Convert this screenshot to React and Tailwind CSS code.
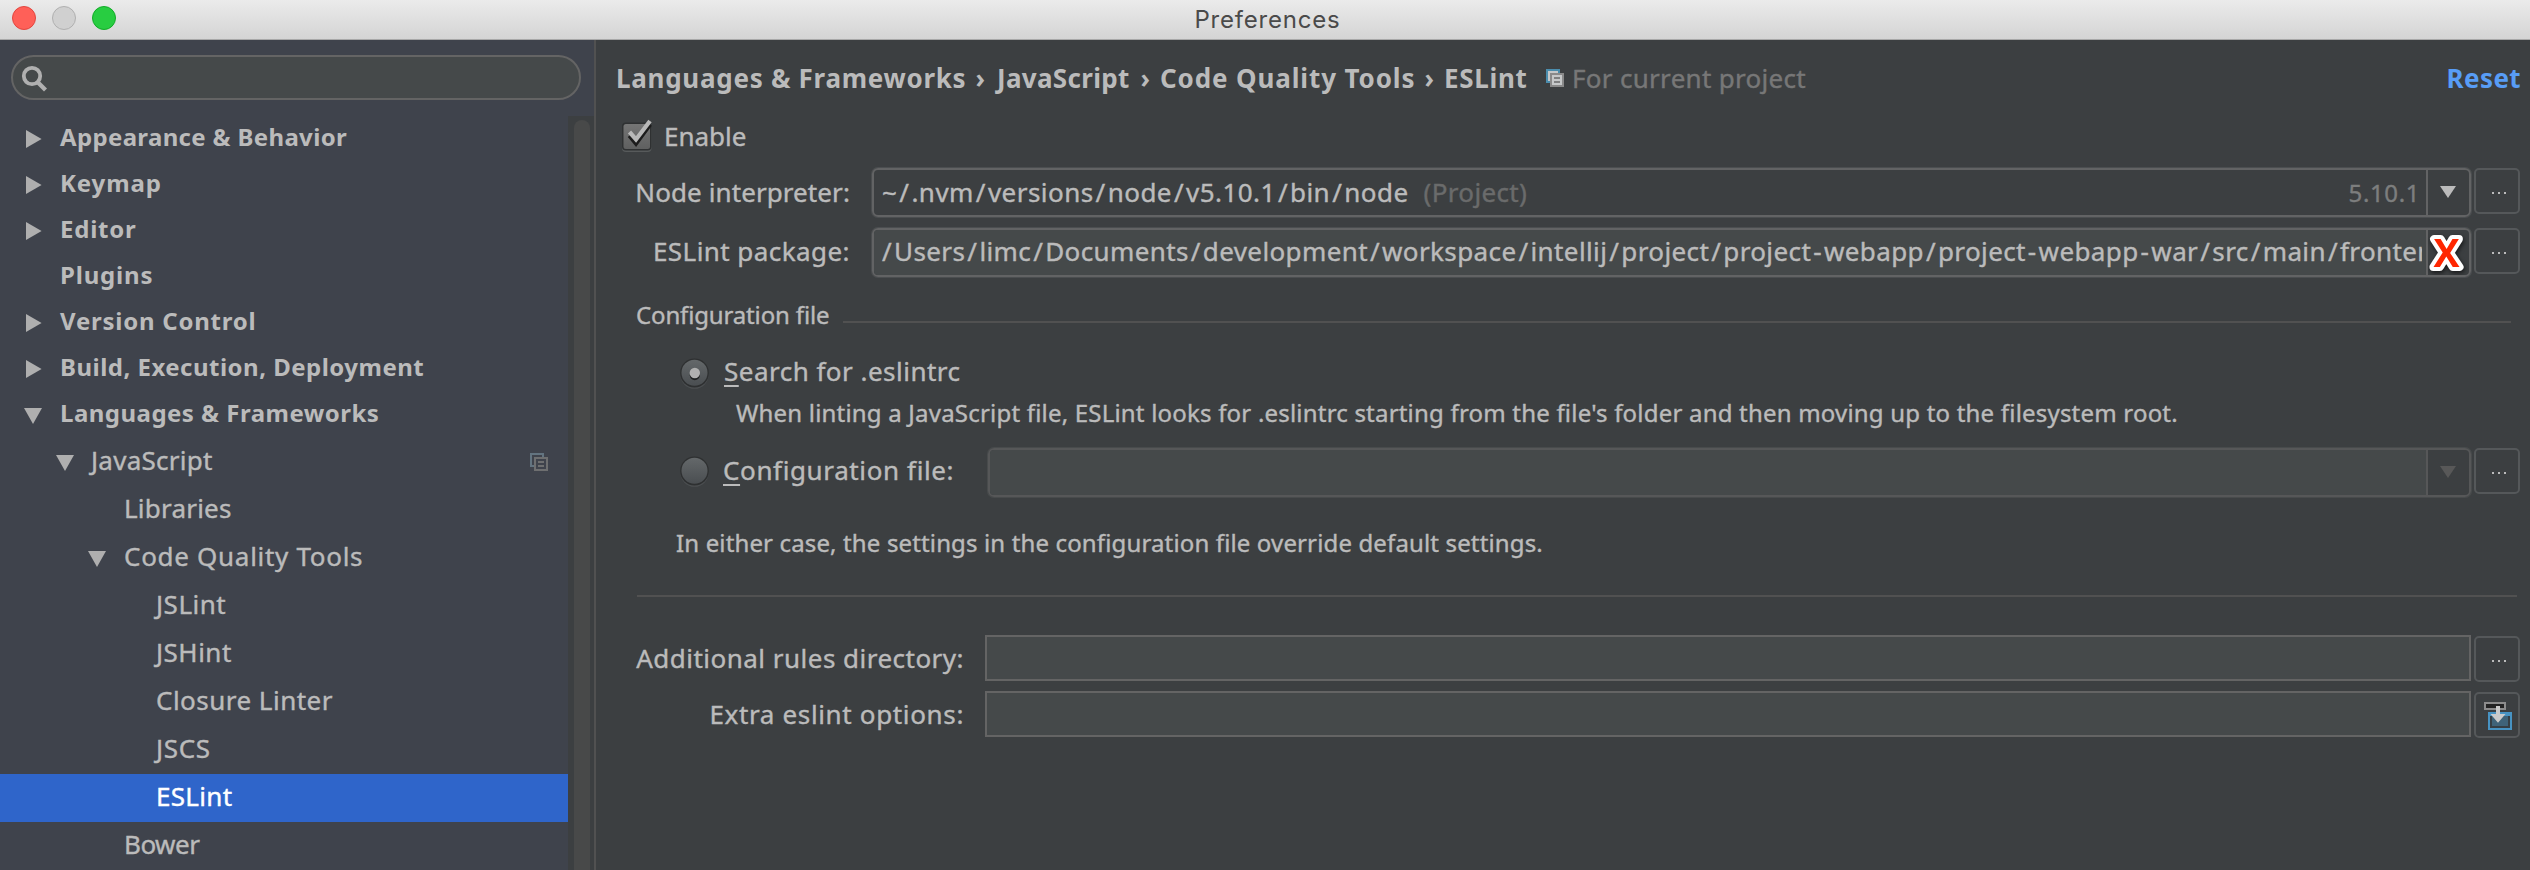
import React from "react";

const TREE = [
  { label: "Appearance & Behavior", level: 0, arrow: "right", track: "tracking-[0.34px]" },
  { label: "Keymap", level: 0, arrow: "right", track: "tracking-[0.9px]" },
  { label: "Editor", level: 0, arrow: "right", track: "tracking-[0.76px]" },
  { label: "Plugins", level: 0, track: "tracking-[0.82px]" },
  { label: "Version Control", level: 0, arrow: "right", track: "tracking-[0.76px]" },
  { label: "Build, Execution, Deployment", level: 0, arrow: "right", track: "tracking-[0.48px]" },
  { label: "Languages & Frameworks", level: 0, arrow: "down", track: "tracking-[0.48px]" },
  { label: "JavaScript", level: 1, arrow: "down", scoped: true, track: "tracking-[0.26px]" },
  { label: "Libraries", level: 2, track: "tracking-[0.22px]" },
  { label: "Code Quality Tools", level: 2, arrow: "down", track: "tracking-[0.7px]" },
  { label: "JSLint", level: 3, track: "tracking-[0.51px]" },
  { label: "JSHint", level: 3, track: "tracking-[0.5px]" },
  { label: "Closure Linter", level: 3, track: "tracking-[0.48px]" },
  { label: "JSCS", level: 3, track: "tracking-[0.67px]" },
  { label: "ESLint", level: 3, selected: true, track: "tracking-[0.3px]" },
  { label: "Bower", level: 2, track: "tracking-[-0.5px]" },
];

const ARROW_PAD = ["pl-[24px]", "pl-[56px]", "pl-[88px]", "pl-[120px]"];
const LABEL_WIDTH = ["w-[36px]", "w-[35px]", "w-[36px]", "w-[36px]"];

function TreeArrow({ dir }) {
  if (!dir) return null;
  return (
    <svg width="18" height="18" viewBox="0 0 18 18" fill="#afafaf">
      {dir === "right" ? <path d="M2 0L17.6 9L2 18Z" /> : <path d="M0 2H18L9 18Z" />}
    </svg>
  );
}

function CopyIcon({ back, front, fill, bars }) {
  return (
    <svg width="18" height="18" viewBox="0 0 18 18" shapeRendering="crispEdges">
      <rect x="1" y="1" width="12" height="12" fill={fill} stroke={back} strokeWidth="2" />
      <rect x="5" y="5" width="12" height="12" fill={fill} stroke={front} strokeWidth="2" />
      <rect x="8" y="8" width="6" height="2" fill={bars} />
      <rect x="8" y="12" width="6" height="2" fill={bars} />
    </svg>
  );
}

function TreeRow({ item }) {
  const top = item.level === 0;
  return (
    <div
      className={
        "flex shrink-0 items-center " +
        ARROW_PAD[item.level] +
        (top
          ? " h-[46px] text-[24px] font-bold"
          : " h-[48px] text-[26px] [-webkit-text-stroke:0.4px_currentColor]") +
        (item.selected ? " bg-[#2f65ca] text-white" : "")
      }
    >
      <div className={"flex shrink-0 items-center " + LABEL_WIDTH[item.level]}>
        <TreeArrow dir={item.arrow} />
      </div>
      <span className={"pb-[4px] leading-none whitespace-nowrap " + item.track}>{item.label}</span>
      {item.scoped && (
        <span className="mr-[20px] ml-auto">
          <CopyIcon back="#637480" front="#6e6f70" fill="#3f434c" bars="#6e6f70" />
        </span>
      )}
    </div>
  );
}

function Sidebar() {
  return (
    <aside className="flex w-[596px] shrink-0 flex-col overflow-hidden border-r-2 border-[#515151] bg-[#3f434c]">
      <div className="flex h-[76px] shrink-0 items-start pt-[15px] pl-[11px]">
        <div className="flex h-[45px] w-[570px] items-center rounded-full border-2 border-[#646464] bg-[#45494a] pl-[8px]">
          <svg width="28" height="28" viewBox="0 0 28 28" fill="none" stroke="#b0b0b0">
            <circle cx="11" cy="12" r="8.2" strokeWidth="3.8" />
            <path d="M16.5 18L24.5 26" strokeWidth="4.2" />
          </svg>
        </div>
      </div>
      <div className="flex min-h-0 flex-1">
        <div className="flex w-[568px] flex-col overflow-hidden text-[#bbbbbb]">
          {TREE.map((item, i) => (
            <TreeRow key={i} item={item} />
          ))}
        </div>
        <div className="flex flex-1 bg-[#3c3f41] pt-[4px] pl-[6px]">
          <div className="w-[16px] rounded-t-full bg-[#484949]" />
        </div>
      </div>
    </aside>
  );
}

function SmallButton({ children }) {
  return (
    <button className="mt-px ml-[2px] flex h-[46px] w-[46px] shrink-0 items-start self-start rounded-[5px] border-2 border-[#55585a]">
      {children || (
        <span className="flex gap-[4px] pt-[22px] pl-[16px]">
          <i className="h-[2px] w-[2px] bg-[#bbbbbb]" />
          <i className="h-[2px] w-[2px] bg-[#bbbbbb]" />
          <i className="h-[2px] w-[2px] bg-[#bbbbbb]" />
        </span>
      )}
    </button>
  );
}

function Combo({ children, disabled, editable, right }) {
  return (
    <div
      className={
        "mt-px mr-px ml-px flex h-[49px] min-w-0 flex-1 overflow-hidden rounded-[6px] border-2 " +
        (disabled
          ? "border-[#565758] shadow-[0_0_0_1px_#484b4c]"
          : "border-[#626364] shadow-[0_0_0_1px_#4b4e50]")
      }
    >
      <div
        className={
          "flex min-w-0 flex-1 items-center overflow-hidden " + (editable ? "bg-[#45494a]" : "")
        }
      >
        {children}
      </div>
      <div
        className={
          "flex w-[43px] shrink-0 items-center justify-center border-l-2 " +
          (disabled ? "border-[#565758]" : "border-[#626364]")
        }
      >
        {right || (
          <svg width="16" height="12" viewBox="0 0 16 12" className="mb-[1px] -ml-[2px]">
            <path d="M0 0H16L8 12Z" fill={disabled ? "#585858" : "#bbbbbb"} />
          </svg>
        )}
      </div>
    </div>
  );
}

/* File path with wide separators */
function PathText({ path }) {
  return path.split(/([/-])/).map((part, i) =>
    part === "/" || part === "-" ? (
      <span key={i} className="mx-[2px]">
        {part}
      </span>
    ) : (
      part
    )
  );
}

function Radio({ checked }) {
  return (
    <svg width="32" height="34" viewBox="0 0 32 34" className="shrink-0">
      <defs>
        <linearGradient id="radioFill" x1="0" y1="0" x2="0" y2="1">
          <stop offset="0" stopColor="#64686a" />
          <stop offset="1" stopColor="#4a4e51" />
        </linearGradient>
      </defs>
      <circle cx="16.5" cy="17.6" r="14.2" fill="#4c4f51" />
      <circle cx="16.5" cy="16" r="14.4" fill="#2e3031" />
      <circle cx="16.5" cy="15.8" r="13" fill="url(#radioFill)" />
      {checked && (
        <>
          <circle cx="16.8" cy="18.2" r="5" fill="#1f2122" />
          <circle cx="16.8" cy="16" r="5.2" fill="#b0b0b0" />
        </>
      )}
    </svg>
  );
}

function Checkbox() {
  return (
    <svg width="34" height="34" viewBox="0 0 34 34" className="shrink-0">
      <defs>
        <linearGradient id="checkFill" x1="0" y1="0" x2="0" y2="1">
          <stop offset="0" stopColor="#757575" />
          <stop offset="1" stopColor="#5f6060" />
        </linearGradient>
      </defs>
      <rect x="2" y="6" width="29.5" height="27" rx="4" fill="#575a5b" />
      <rect x="2" y="3.5" width="29.5" height="28" rx="4" fill="#2f3132" />
      <rect x="3.5" y="5" width="26.5" height="25" rx="2.5" fill="url(#checkFill)" />
      <path d="M9.5 16.5L16 24.5L30 5.5" fill="none" stroke="#1c1c1c" strokeWidth="4.4" />
      <path d="M9.5 13L16 20.5L30 2" fill="none" stroke="#b8b8b8" strokeWidth="4.2" />
    </svg>
  );
}

function Crumbs() {
  return (
    <div className="flex h-[76px] shrink-0 items-center pl-[20px] text-[26px] leading-[36px] whitespace-nowrap">
      <div className="flex w-[381px] justify-between pr-[12px] font-bold">
        <span className="tracking-[0.72px]">Languages &amp; Frameworks</span>
        <span>›</span>
      </div>
      <div className="flex w-[163px] justify-between pr-[10px] font-bold">
        <span className="tracking-[0.31px]">JavaScript</span>
        <span>›</span>
      </div>
      <div className="flex w-[284px] justify-between pr-[10px] font-bold">
        <span className="tracking-[0.88px]">Code Quality Tools</span>
        <span>›</span>
      </div>
      <div className="w-[102px] font-bold tracking-[0.7px]">ESLint</div>
      <CopyIcon back="#4b8dad" front="#8a8a8a" fill="#c6c8c9" bars="#7f8081" />
      <span className="ml-[8px] tracking-[0.3px] text-[#777777] [-webkit-text-stroke:0.4px_currentColor]">
        For current project
      </span>
      <span className="mr-[9px] ml-auto font-bold tracking-[0.4px] text-[#589df6]">Reset</span>
    </div>
  );
}

function InsertIcon() {
  return (
    <svg width="42" height="42" viewBox="2 2 42 42">
      <rect x="11" y="11" width="20" height="6" fill="#232323" stroke="#8c8c8c" strokeWidth="2" />
      <rect x="14" y="20" width="24" height="18" fill="#4793c3" />
      <rect x="16" y="24" width="20" height="12" fill="#363f45" />
      <rect x="18" y="24" width="16" height="10" fill="#3f6379" />
      <path d="M22 14H26V22H31.5L24 30.7L16.5 22H22Z" fill="#cacaca" />
    </svg>
  );
}

function TextRow({ label, track, children, first }) {
  return (
    <div className={"flex h-[46px] " + (first ? "mt-[38px]" : "mt-[10px]")}>
      <div
        className={
          "mr-[21px] w-[368px] shrink-0 text-right text-[26px] leading-[46px] whitespace-nowrap " + track
        }
      >
        {label}
      </div>
      <div className="flex-1 border-2 border-[#646464] bg-[#45494a]" />
      <div className="w-px" />
      {children}
    </div>
  );
}

export default function App() {
  return (
    <div className="flex h-[870px] w-[2530px] flex-col overflow-hidden bg-[#3c3f41] font-['Noto_Sans',sans-serif] text-[#bbbbbb]">
      <header className="relative flex h-[40px] shrink-0 items-center justify-center border-b border-[#a8a8a8] bg-linear-to-b from-[#ebebeb] to-[#d4d4d4]">
        <div className="absolute top-[6px] left-[12px] flex gap-[16px]">
          <span className="h-[24px] w-[24px] rounded-full border border-[#e2463f] bg-[#ff6058]" />
          <span className="h-[24px] w-[24px] rounded-full border border-[#b0b0b0] bg-[#d0d0d0]" />
          <span className="h-[24px] w-[24px] rounded-full border border-[#12ac28] bg-[#28cd41]" />
        </div>
        <h1 className="pl-[5px] font-['Inter',sans-serif] text-[24px] leading-[39px] tracking-[0.8px] text-[#4a4a4a]">
          Preferences
        </h1>
      </header>
      <div className="flex min-h-0 flex-1">
        <Sidebar />
        <main className="flex min-w-0 flex-1 flex-col">
          <Crumbs />

          <div className="flex flex-col [-webkit-text-stroke:0.4px_currentColor]">
            <div className="flex h-[39px] items-center pl-[24px]">
              <Checkbox />
              <span className="ml-[10px] text-[26px] leading-[36px]">Enable</span>
            </div>

            <div className="mt-[12px] mr-[10px] flex h-[51px]">
              <div className="mr-[21px] w-[254px] shrink-0 text-right text-[26px] leading-[50px] tracking-[0.09px]">
                Node interpreter:
              </div>
              <Combo>
                <span className="pb-px pl-[8px] text-[26px] tracking-[0.45px] whitespace-nowrap">
                  <PathText path="~/.nvm/versions/node/v5.10.1/bin/node" />
                </span>
                <span className="pb-px pl-[15px] text-[26px] tracking-[0.35px] text-[#6a6b6b]">(Project)</span>
                <span className="ml-auto pr-[6px] text-[24px] tracking-[0.6px] text-[#7d7e7e]">5.10.1</span>
              </Combo>
              <SmallButton />
            </div>

            <div className="mt-[9px] mr-[10px] flex h-[51px]">
              <div className="mr-[21px] w-[254px] shrink-0 text-right text-[26px] leading-[49px] tracking-[0.44px]">
                ESLint package:
              </div>
              <Combo
                editable
                right={
                  <svg width="40" height="45" viewBox="0 0 40 45" className="overflow-visible">
                    <text
                      x="17.5"
                      y="36.5"
                      textAnchor="middle"
                      className="fill-[#ff2600] stroke-white font-['Open_Sans',sans-serif] text-[39px] font-bold drop-shadow-[1px_2px_2px_rgba(0,0,0,0.6)]"
                      strokeWidth="8"
                      strokeLinejoin="round"
                      paintOrder="stroke"
                    >
                      X
                    </text>
                  </svg>
                }
              >
                <div className="mr-[4px] overflow-hidden pb-[2px] pl-[6px] text-[26px] tracking-[0.385px] whitespace-nowrap">
                  <PathText path="/Users/limc/Documents/development/workspace/intellij/project/project-webapp/project-webapp-war/src/main/frontend" />
                </div>
              </Combo>
              <SmallButton />
            </div>

            <div className="mt-[17px] flex h-[40px] pl-[40px]">
              <span className="w-[207px] shrink-0 text-[24px] leading-[40px] tracking-[-0.15px]">
                Configuration file
              </span>
              <div className="mt-[26px] mr-[19px] h-[2px] flex-1 bg-[#515151]" />
            </div>

            <div className="mt-[16px] flex h-[41px] items-center pl-[82px]">
              <div className="pt-[4px]">
                <Radio checked />
              </div>
              <span className="ml-[14px] text-[26px] leading-[41px] tracking-[0.48px]">
                <span className="underline decoration-2 underline-offset-[4px] [text-decoration-skip-ink:none]">S</span>
                earch for .eslintrc
              </span>
            </div>

            <p className="h-[41px] pl-[140px] text-[24px] leading-[41px] tracking-[0.2px] whitespace-nowrap">
              When linting a JavaScript file, ESLint looks for .eslintrc starting from the file's folder and then
              moving up to the filesystem root.
            </p>

            <div className="mt-[14px] mr-[10px] flex h-[51px] pl-[82px]">
              <div className="pt-[8px]">
                <Radio />
              </div>
              <span className="ml-[13px] w-[264px] shrink-0 text-[26px] leading-[46px] tracking-[0.62px] whitespace-nowrap">
                <span className="underline decoration-2 underline-offset-[4px] [text-decoration-skip-ink:none]">C</span>
                onfiguration file:
              </span>
              <Combo disabled editable />
              <SmallButton />
            </div>

            <p className="mt-[24px] h-[41px] pl-[80px] text-[24px] leading-[41px] tracking-[0.14px]">
              In either case, the settings in the configuration file override default settings.
            </p>

            <div className="mt-[32px] mr-[13px] ml-[41px] h-[2px] shrink-0 bg-[#515151]" />

            <div className="mr-[10px]">
              <TextRow first label="Additional rules directory:" track="tracking-[0.48px]">
                <SmallButton />
              </TextRow>
              <TextRow label="Extra eslint options:" track="tracking-[0.65px]">
                <SmallButton>
                  <InsertIcon />
                </SmallButton>
              </TextRow>
            </div>
          </div>
        </main>
      </div>
    </div>
  );
}
